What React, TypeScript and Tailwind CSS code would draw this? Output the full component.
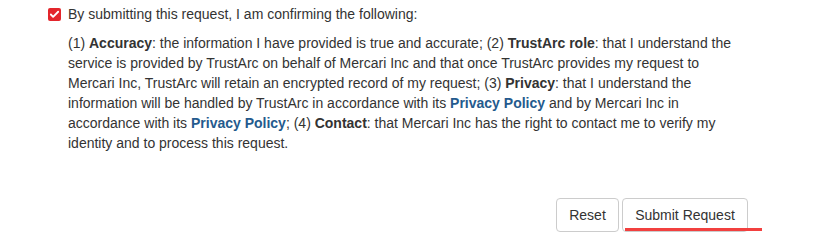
import { Check } from "lucide-react";

export default function App() {
  const link = "font-bold text-[#245a8d]";
  return (
    <div className="w-[824px] h-[237px] bg-white text-[#333] text-[14px] leading-[20px] font-['Liberation_Sans',Arial,sans-serif]">
      <div className="pl-[48px] pt-[4px]">
        <div className="flex items-start">
          <span className="mt-[4px] w-[13px] h-[13px] rounded-[2px] bg-[#e3262c] flex items-center justify-center">
            <Check className="w-[11px] h-[11px] text-white" strokeWidth={4} />
          </span>
          <span className="ml-[7px]">By submitting this request, I am confirming the following:</span>
        </div>
        <p className="mt-[9px] ml-[20px] w-[680px]">
          (1) <b>Accuracy</b>: the information I have provided is true and accurate; (2) <b>TrustArc role</b>: that I understand the
          service is provided by TrustArc on behalf of Mercari Inc and that once TrustArc provides my request to
          Mercari Inc, TrustArc will retain an encrypted record of my request; (3) <b>Privacy</b>: that I understand the
          information will be handled by TrustArc in accordance with its <a className={link}>Privacy Policy</a> and by Mercari Inc in
          accordance with its <a className={link}>Privacy Policy</a>; (4) <b>Contact</b>: that Mercari Inc has the right to contact me to verify my
          identity and to process this request.
        </p>
      </div>
      <div className="flex justify-start pl-[556px] mt-[45px] gap-[3px]">
        <button className="h-[34px] w-[63px] border border-[#ccc] rounded-[4px] bg-white text-[#333]">Reset</button>
        <div className="relative">
          <button className="h-[34px] w-[126px] border border-[#ccc] rounded-[4px] bg-white text-[#333]">Submit Request</button>
          <div className="absolute left-[3px] top-[30px] w-[137px] h-[3px] bg-[#f2403f]" />
        </div>
      </div>
    </div>
  );
}
